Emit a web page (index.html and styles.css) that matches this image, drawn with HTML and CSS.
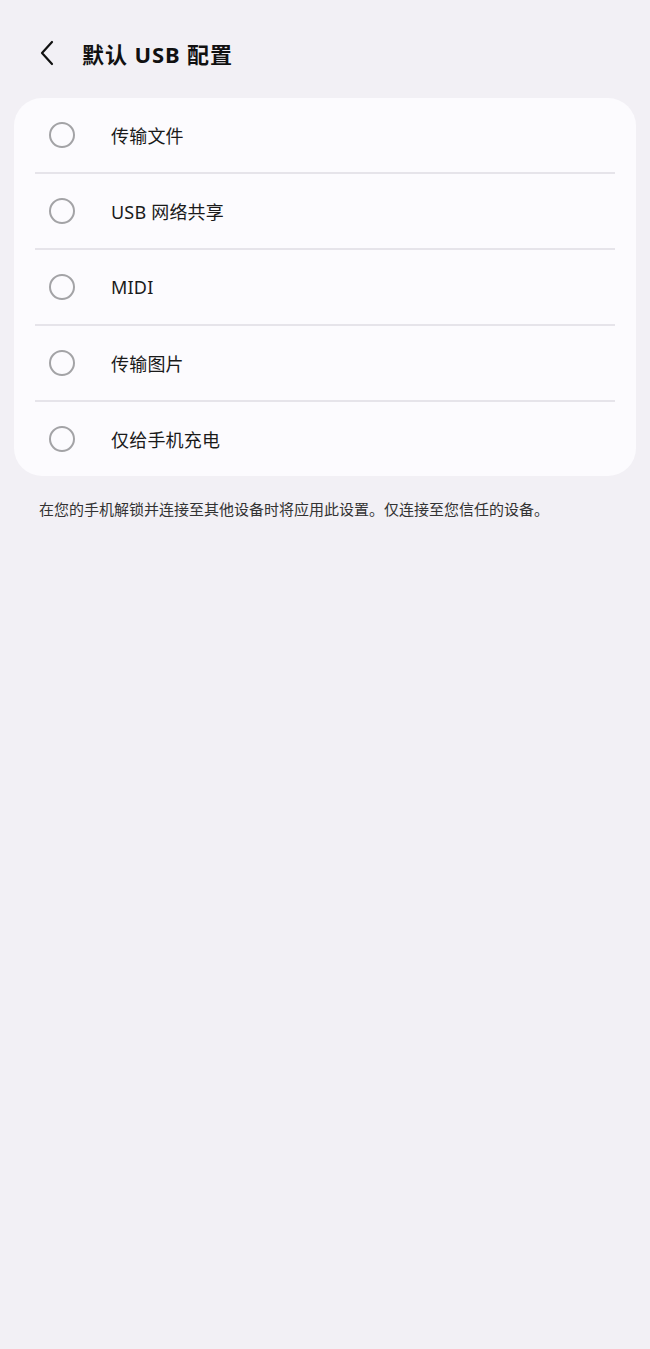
FILE: index.html
```html
<!DOCTYPE html>
<html lang="zh-CN">
  <head>
    <meta charset="UTF-8" />
    <meta name="viewport" content="width=device-width, initial-scale=1.0" />
    <title>默认 USB 配置</title>
    <link rel="stylesheet" href="styles.css">
  </head>
  <body>
    <div class="page">
      <header class="topbar">
        <svg class="back" width="16" height="26" viewBox="0 0 16 26">
          <path d="M13 2 L3 13 L13 24" fill="none" stroke="#111" stroke-width="2.2" stroke-linecap="round" stroke-linejoin="round"/>
        </svg>
        <h1>默认 USB 配置</h1>
      </header>

      <ul class="options">
        <li><span class="radio"></span>传输文件</li>
        <li><span class="radio"></span>USB 网络共享</li>
        <li><span class="radio"></span>MIDI</li>
        <li><span class="radio"></span>传输图片</li>
        <li><span class="radio"></span>仅给手机充电</li>
      </ul>

      <p class="note">在您的手机解锁并连接至其他设备时将应用此设置。仅连接至您信任的设备。</p>
    </div>
  </body>
</html>
```

FILE: styles.css
```css
* {
  margin: 0;
  padding: 0;
  box-sizing: border-box;
}

body {
  background: #f2f0f5;
  font-family: "Noto Sans", "Noto Sans CJK SC", sans-serif;
  color: #111;
}

.page {
  min-height: 100vh;
  padding: 0 14px;

  > .topbar {
    height: 98px;
    display: flex;
    align-items: center;
    padding: 8px 0 0 25px;
    gap: 27px;

    > h1 {
      font-size: 22px;
      font-weight: 700;
      letter-spacing: 0.9px;
    }
  }

  > .options {
    list-style: none;
    background: #fcfbfe;
    border-radius: 28px;
    padding: 0 21px;

    > li {
      height: 76px;
      display: flex;
      align-items: center;
      gap: 36px;
      padding-left: 14px;
      font-size: 18px;
      letter-spacing: 0.2px;
      color: #1a1a1a;
      border-bottom: 2px solid #e6e4ea;

      &:last-child {
        border-bottom: none;
        height: 74px;
      }
    }
  }

  & .radio {
    width: 26px;
    height: 26px;
    border: 2px solid #a3a3a6;
    border-radius: 50%;
    flex: none;
  }

  > .note {
    padding: 22px 0 0 25px;
    font-size: 15px;
    color: #333;
  }
}
```
